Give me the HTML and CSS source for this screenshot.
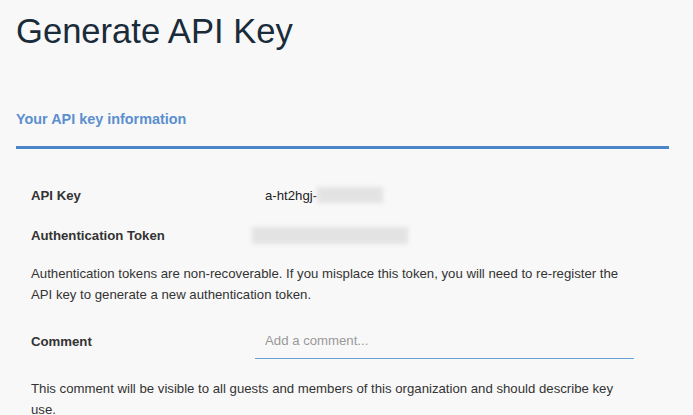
FILE: index.html
```html
<!DOCTYPE html>
<html lang="en">
<head>
  <meta charset="UTF-8" />
  <meta name="viewport" content="width=device-width, initial-scale=1.0"/>
  <title>Generate API Key</title>
  <link rel="stylesheet" href="styles.css">
</head>
<body>

  <h1 class="page-title">Generate API Key</h1>

  <section class="panel">
    <h2 class="panel-title">Your API key information</h2>

    <div class="panel-body">
      <div class="field-row">
        <div class="field-label">API Key</div>
        <div class="field-value">a-ht2hgj-<span class="blur blur-key"></span></div>
      </div>

      <div class="field-row">
        <div class="field-label">Authentication Token</div>
        <div class="field-value token"><span class="blur blur-token"></span></div>
      </div>

      <p class="note">Authentication tokens are non-recoverable. If you misplace this token, you will need to re-register the API key to generate a new authentication token.</p>

      <div class="field-row comment-row">
        <label class="field-label" for="comment">Comment</label>
        <input class="comment-input" id="comment" type="text" placeholder="Add a comment...">
      </div>

      <p class="note">This comment will be visible to all guests and members of this organization and should describe key use.</p>
    </div>
  </section>

</body>
</html>
```

FILE: styles.css
```css
body {
  font-family: "Liberation Sans", Arial, sans-serif;
  background-color: #f8f8f8;
  color: #333;
  margin: 0;
  padding: 0 24px 0 16px;
}

.page-title {
  margin: 0;
  padding-top: 10px;
  font-size: 34.6px;
  line-height: 42px;
  font-weight: normal;
  color: #1a2b3a;
}

.panel {
  margin-top: 56px;
}

.panel-title {
  margin: 0;
  padding: 2px 0 18px;
  font-size: 14.4px;
  line-height: 18px;
  color: #5b8fcf;
  border-bottom: 3px solid #4a86c8;
}

.panel-body {
  width: 603px;
  padding: 26px 0 0 15px;
  font-size: 13.2px;
}

.field-row {
  display: flex;
  align-items: center;
  height: 40px;
}

.field-label {
  width: 224px;
  font-weight: bold;
  color: #333;
}

.field-value {
  padding-left: 10px;
  color: #222;
  display: flex;
  align-items: center;
}

.field-value.token {
  padding-left: 0;
}

.blur {
  display: inline-block;
  background-color: #e3e3e3;
  filter: blur(2px);
}

.blur-key {
  width: 66px;
  height: 16px;
}

.blur-token {
  width: 156px;
  height: 17px;
  margin-left: -3px;
}

.note {
  margin: 8px 0 16px;
  line-height: 21px;
  color: #333;
}

.comment-row + .note {
  margin-top: 17px;
}

.comment-input {
  flex: 1;
  height: 34px;
  padding: 0 10px;
  border: none;
  border-bottom: 1px solid #6a9fd8;
  background: transparent;
  font-family: inherit;
  font-size: 13.2px;
  color: #333;
  outline: none;
}

.comment-input::placeholder {
  color: #999;
}
```
